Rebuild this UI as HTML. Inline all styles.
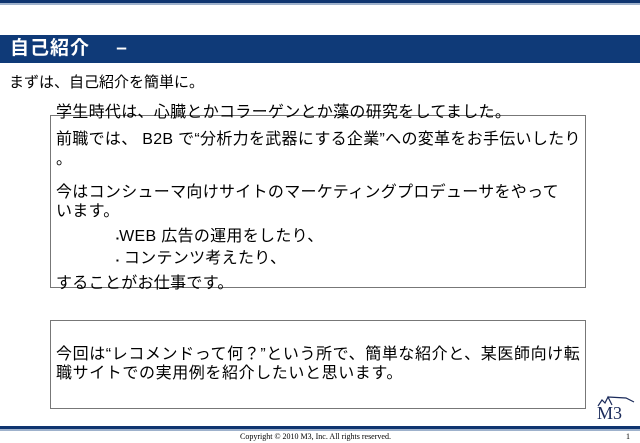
<!DOCTYPE html>
<html><head><meta charset="utf-8"><style>
body{margin:0;width:640px;height:443px;background:#fff;position:relative;overflow:hidden;font-family:"Liberation Sans","Noto Sans CJK JP",sans-serif;color:#000}
.a{position:absolute;white-space:nowrap}
.t{font-size:16px;line-height:18px;letter-spacing:0.3px}
</style></head><body>
<div class="a" style="left:0;top:0;width:640px;height:3px;background:#0f3570"></div>
<div class="a" style="left:0;top:3px;width:640px;height:2px;background:#9fb2cc"></div>
<div class="a" style="left:0;top:35px;width:640px;height:28px;background:#0f3a78"></div>
<div class="a" style="left:10px;top:38px;font-size:19px;line-height:22px;color:#fff;font-weight:bold;letter-spacing:1px">自己紹介　 –</div>
<div class="a" style="left:9px;top:74px;font-size:15px;line-height:18px">まずは、自己紹介を簡単に。</div>
<div class="a" style="left:50px;top:115px;width:534px;height:171px;border:1px solid #777"></div>
<div class="a t" style="left:56px;top:104px">学生時代は、心臓とかコラーゲンとか藻の研究をしてました。</div>
<div class="a t" style="left:56px;top:131px">前職では、 B2B で“分析力を武器にする企業”への変革をお手伝いしたり</div>
<div class="a t" style="left:56px;top:151px">。</div>
<div class="a t" style="left:56px;top:184px">今はコンシューマ向けサイトのマーケティングプロデューサをやって</div>
<div class="a t" style="left:56px;top:203px">います。</div>
<div class="a t" style="left:116px;top:228px"><span style="font-size:8px">▪</span>WEB 広告の運用をしたり、</div>
<div class="a t" style="left:116px;top:250px"><span style="font-size:8px">▪</span> コンテンツ考えたり、</div>
<div class="a t" style="left:56px;top:275px">することがお仕事です。</div>
<div class="a" style="left:50px;top:320px;width:534px;height:87px;border:1px solid #777"></div>
<div class="a t" style="left:56px;top:346px;letter-spacing:0.6px">今回は“レコメンドって何？”という所で、簡単な紹介と、某医師向け転</div>
<div class="a t" style="left:56px;top:365px;letter-spacing:0.6px">職サイトでの実用例を紹介したいと思います。</div>
<div class="a" style="left:597px;top:403px;font-family:'Liberation Serif',serif;font-size:18px;color:#1a2a5a">M3</div>
<svg class="a" style="left:596px;top:394px" width="40" height="16"><path d="M2 12 L6 6 L9 9 L12 3 L16 11 M12 3 L30 4 L38 8" stroke="#1a2a5a" stroke-width="1.2" fill="none"/></svg>
<div class="a" style="left:0;top:426px;width:640px;height:3px;background:#0f3570"></div>
<div class="a" style="left:0;top:429px;width:640px;height:2px;background:#9fb2cc"></div>
<div class="a" style="left:240px;top:432px;font-family:'Liberation Serif',serif;font-size:8px">Copyright © 2010 M3, Inc. All rights reserved.</div>
<div class="a" style="left:626px;top:432px;font-family:'Liberation Serif',serif;font-size:8px">1</div>
</body></html>
